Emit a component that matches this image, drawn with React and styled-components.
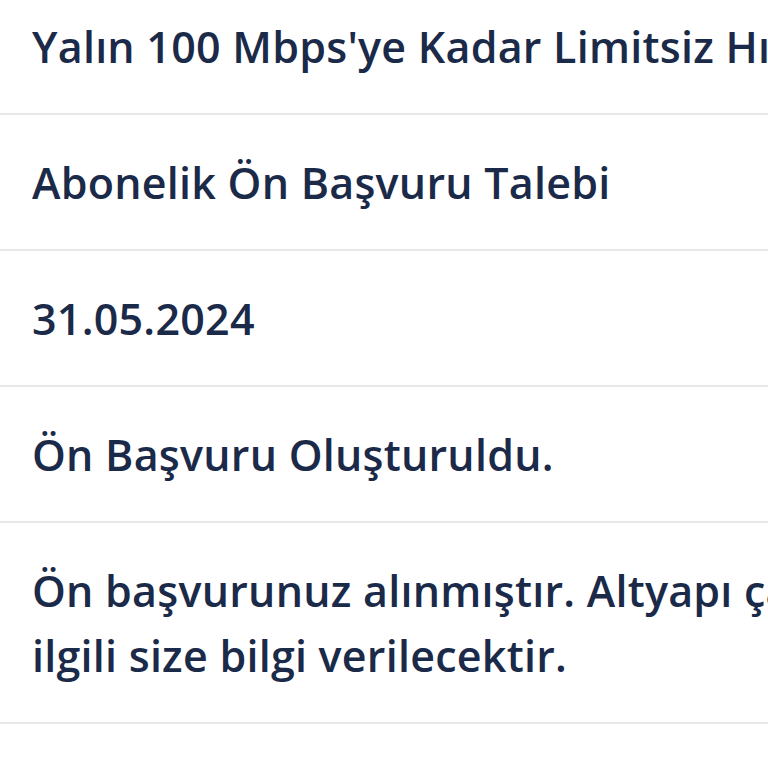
import React from 'react';
import styled, { createGlobalStyle } from 'styled-components';

const GlobalStyle = createGlobalStyle`
    html, body {
        margin: 0;
        padding: 0;
        background: #ffffff;
        overflow: hidden;
    }
`

const rows = [
    "Yalın 100 Mbps'ye Kadar Limitsiz Hız Kampanyası",
    'Abonelik Ön Başvuru Talebi',
    '31.05.2024',
    'Ön Başvuru Oluşturuldu.',
    ['Ön başvurunuz alınmıştır. Altyapı çalışması tamamlandığında konu ile', 'ilgili size bilgi verilecektir.'],
]

export default function App() {
    return (
        <>
            <GlobalStyle />
            <List>
                {rows.map((value, index) => {
                    return (
                        <Row key={index}>
                            {Array.isArray(value)
                                ? value.map((line, i) => <Line key={i}>{line}</Line>)
                                : <Line>{value}</Line>}
                        </Row>
                    )
                })}
            </List>
        </>
    )
}

const List = styled.div`
    width: 1600px;
    margin-top: -21px;
    font-family: 'Open Sans', 'Noto Sans', sans-serif;
`

const Row = styled.div`
    padding: 35px 32px 34px;
    border-bottom: 2px solid #e8e8ea;
`

const Line = styled.div`
    font-size: 43px;
    line-height: 65px;
    font-weight: 600;
    letter-spacing: 0.25px;
    color: #1a2a48;
    white-space: nowrap;
`
